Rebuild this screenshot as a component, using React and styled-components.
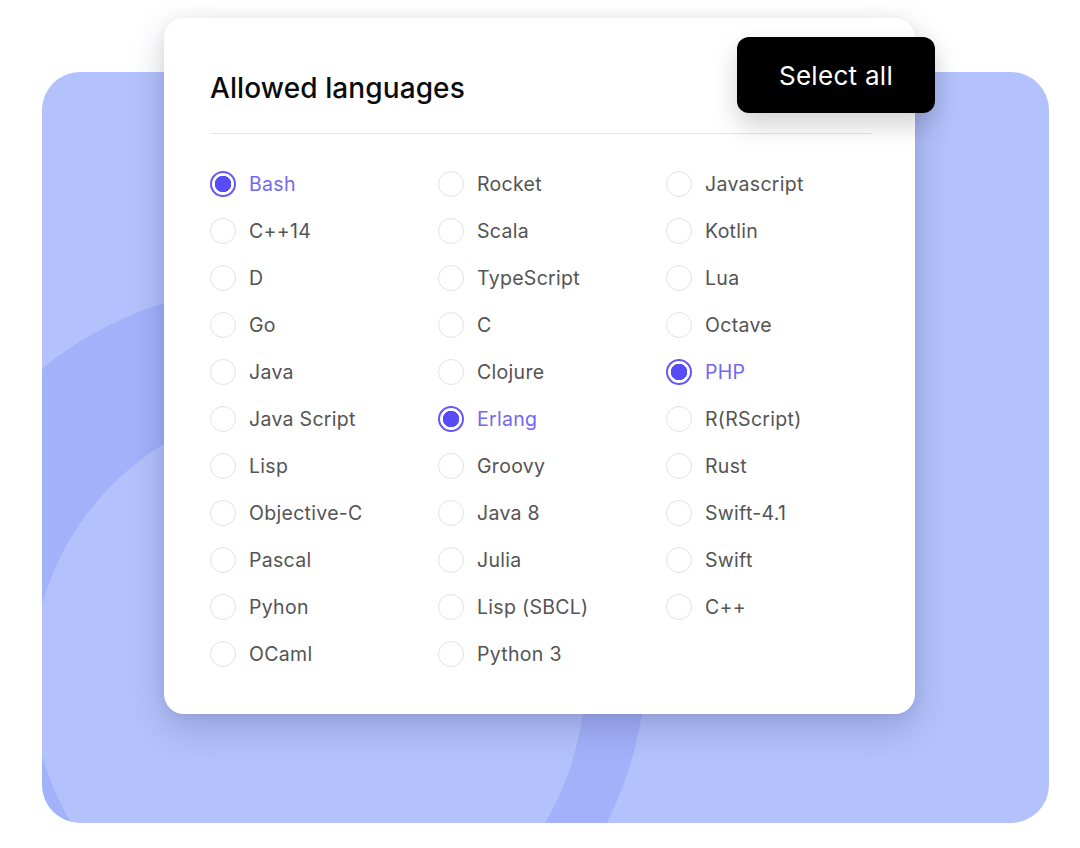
import { useState } from "react";
import styled, { createGlobalStyle } from "styled-components";

const columns = [
  ["Bash", "C++14", "D", "Go", "Java", "Java Script", "Lisp", "Objective-C", "Pascal", "Pyhon", "OCaml"],
  ["Rocket", "Scala", "TypeScript", "C", "Clojure", "Erlang", "Groovy", "Java 8", "Julia", "Lisp (SBCL)", "Python 3"],
  ["Javascript", "Kotlin", "Lua", "Octave", "PHP", "R(RScript)", "Rust", "Swift-4.1", "Swift", "C++"],
];

const GlobalStyle = createGlobalStyle`
  html, body {
    margin: 0;
    padding: 0;
    background: #ffffff;
    font-family: Inter, "Noto Sans", "Liberation Sans", sans-serif;
  }
  * { box-sizing: border-box; }
`;

const App = () => {
  const [selected, setSelected] = useState(["Bash", "Erlang", "PHP"]);

  const toggle = (name) => {
    setSelected((prev) =>
      prev.includes(name) ? prev.filter((n) => n !== name) : [...prev, name]
    );
  };

  const all = columns.flat();

  return (
    <>
      <GlobalStyle />
      <Stage>
        <Backdrop />
        <Card>
          <Header>
            <Title>Allowed languages</Title>
            <SelectAll onClick={() => setSelected(all)}>Select all</SelectAll>
          </Header>
          <Divider />
          <Grid>
            {columns.map((col, ci) => (
              <Column key={ci}>
                {col.map((name) => {
                  const on = selected.includes(name);
                  return (
                    <Option key={name} onClick={() => toggle(name)}>
                      <Radio $on={on} />
                      <Label $on={on}>{name}</Label>
                    </Option>
                  );
                })}
              </Column>
            ))}
          </Grid>
        </Card>
      </Stage>
    </>
  );
};

const Stage = styled.div`
  display: grid;
  width: 1080px;
  height: 848px;
  overflow: hidden;
`;

const Backdrop = styled.div`
  grid-area: 1 / 1;
  margin: 72px 0 0 42px;
  width: 1007px;
  height: 751px;
  border-radius: 38px;
  background:
    radial-gradient(circle 277px at 266px 608px, #b3c2fc 99.6%, transparent 100%),
    radial-gradient(circle 371px at 234px 584px, #a1b1fa 99.7%, transparent 100%),
    #b3c2fc;
`;

const Card = styled.div`
  grid-area: 1 / 1;
  align-self: start;
  justify-self: start;
  margin: 18px 0 0 164px;
  width: 751px;
  height: 696px;
  padding: 19px 44px 0 46px;
  background: #ffffff;
  border-radius: 20px;
  box-shadow: 0 14px 34px rgba(40, 40, 90, 0.22), 0 0 14px rgba(0, 0, 0, 0.05);
  z-index: 1;
`;

const Header = styled.div`
  display: flex;
  justify-content: space-between;
  align-items: flex-start;
  height: 76px;
`;

const Title = styled.h2`
  margin: 35px 0 0;
  font-size: 28px;
  line-height: 32px;
  font-weight: 500;
  color: #0b0b0b;
  letter-spacing: 0.1px;
`;

const SelectAll = styled.button`
  margin-right: -64px;
  width: 198px;
  height: 76px;
  border: none;
  border-radius: 12px;
  background: #000000;
  color: #ffffff;
  font-family: inherit;
  font-size: 26px;
  font-weight: 400;
  letter-spacing: 0.3px;
  cursor: pointer;
  box-shadow: 0 12px 26px rgba(0, 0, 0, 0.18);
`;

const Divider = styled.hr`
  margin: 20px 0 0;
  border: none;
  border-top: 1px solid #e4e4e7;
`;

const Grid = styled.div`
  display: grid;
  grid-template-columns: 228px 228px auto;
  margin-top: 26px;
`;

const Column = styled.div`
  display: flex;
  flex-direction: column;
`;

const Option = styled.label`
  display: flex;
  align-items: center;
  gap: 13px;
  height: 47px;
  cursor: pointer;
`;

const Radio = styled.span`
  flex: none;
  width: 26px;
  height: 26px;
  border-radius: 50%;
  border: ${(p) => (p.$on ? "2px solid #6457f6" : "1.5px solid #e2e2e2")};
  background: ${(p) => (p.$on ? "radial-gradient(circle, #574cf5 0 8px, #ffffff 8.5px)" : "#ffffff")};
`;

const Label = styled.span`
  font-size: 19.5px;
  line-height: 24px;
  color: ${(p) => (p.$on ? "#7367f2" : "#545454")};
  letter-spacing: 0.3px;
`;

export default App;
